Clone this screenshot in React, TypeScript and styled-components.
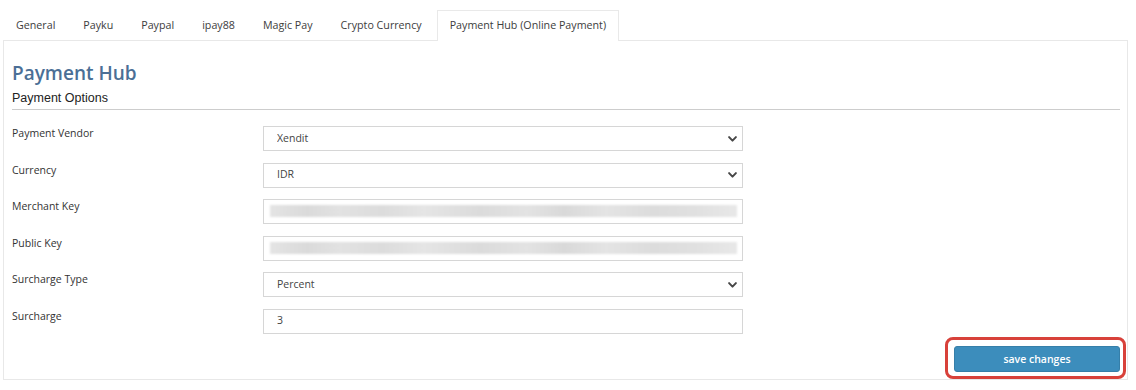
import React from "react";
import styled, { createGlobalStyle } from "styled-components";

const GlobalStyle = createGlobalStyle`
  html, body { margin: 0; padding: 0; background: #ffffff; }
  body { font-family: "Open Sans", "Noto Sans", sans-serif; color: #333; }
  * { box-sizing: border-box; }
`;

const Page = styled.div`
  padding: 10px 8px 0 3px;
`;

const TabList = styled.div`
  display: flex;
  align-items: flex-start;
  height: 30px;
`;

const Tab = styled.div<{ $active?: boolean }>`
  position: relative;
  z-index: 1;
  height: ${(p) => (p.$active ? "31px" : "30px")};
  padding: 0 12px;
  margin-right: 2px;
  border: 1px solid ${(p) => (p.$active ? "#e9e9e9" : "transparent")};
  border-bottom: none;
  background: ${(p) => (p.$active ? "#ffffff" : "transparent")};
  font-size: 10.7px;
  line-height: 28px;
  color: #3d3d3d;
  white-space: nowrap;
  cursor: pointer;
`;

const Panel = styled.div`
  border: 1px solid #e8e8e8;
  padding: 20px 7px 7px 8px;
  background: #fff;
`;

const Title = styled.h2`
  margin: 0;
  font-family: "Open Sans", sans-serif;
  font-weight: 600;
  font-size: 19px;
  line-height: 24px;
  color: #4b6f96;
`;

const Subtitle = styled.h4`
  margin: 5px 0 0;
  font-family: "Liberation Sans", Arial, sans-serif;
  font-weight: 400;
  font-size: 12.5px;
  line-height: 16px;
  color: #222;
`;

const Divider = styled.hr`
  margin: 3px 0 0;
  border: none;
  height: 1px;
  background: #cdcdcd;
`;

const Form = styled.div`
  display: grid;
  grid-template-columns: 251px 480px;
  row-gap: 11.5px;
  margin-top: 16px;
`;

const Label = styled.label`
  font-size: 10.5px;
  line-height: 14px;
  color: #333;
`;

const SelectWrap = styled.div`
  position: relative;
  height: 25px;
`;

const fieldBase = `
  display: block;
  width: 100%;
  height: 25px;
  border: 1px solid #d6d6d6;
  border-radius: 0;
  background: #fff;
  font-family: "Open Sans", sans-serif;
  font-size: 10.5px;
  color: #444;
  padding: 0 13px 2px;
  margin: 0;
  outline: none;
`;

const Select = styled.select`
  ${fieldBase}
  appearance: none;
  -webkit-appearance: none;
`;

const Chevron = styled.svg`
  position: absolute;
  right: 6px;
  top: 50%;
  margin-top: -3px;
  width: 9px;
  height: 6px;
  pointer-events: none;
`;

const TextInput = styled.input`
  ${fieldBase}
`;

const MaskedField = styled.div`
  height: 25px;
  border: 1px solid #d6d6d6;
  padding: 5px 5px 6px 6px;
  display: flex;
  overflow: hidden;
`;

const MaskedValue = styled.div`
  flex: 1;
  background: linear-gradient(
    90deg,
    #e4e4e4 0%,
    #dadada 8%,
    #e2e2e2 15%,
    #dcdcdc 24%,
    #e5e5e5 33%,
    #dbdbdb 45%,
    #e3e3e3 55%,
    #d9d9d9 63%,
    #e4e4e4 72%,
    #dcdcdc 82%,
    #e1e1e1 92%,
    #e8e8e8 100%
  );
  filter: blur(1.2px);
`;

const Footer = styled.div`
  display: flex;
  justify-content: flex-end;
  margin-top: 12px;
`;

const ButtonWrap = styled.div`
  position: relative;
`;

const SaveButton = styled.button`
  display: block;
  width: 166px;
  height: 26px;
  border: 1px solid #367fa9;
  border-radius: 3px;
  background: #3c8dbc;
  color: #fff;
  font-family: "Open Sans", sans-serif;
  font-weight: 600;
  font-size: 10.5px;
  cursor: pointer;
`;

const Highlight = styled.div`
  position: absolute;
  left: -9px;
  right: -6px;
  top: -9px;
  bottom: -7px;
  border: 3px solid #d8413a;
  border-radius: 8px;
  pointer-events: none;
`;

const tabs = [
  "General",
  "Payku",
  "Paypal",
  "ipay88",
  "Magic Pay",
  "Crypto Currency",
  "Payment Hub (Online Payment)",
];

const SelectField = ({ value, options }: { value: string; options: string[] }) => (
  <SelectWrap>
    <Select defaultValue={value}>
      {options.map((o) => (
        <option key={o} value={o}>
          {o}
        </option>
      ))}
    </Select>
    <Chevron viewBox="0 0 9 6">
      <polyline points="1.1,1.1 4.5,4.6 7.9,1.1" fill="none" stroke="#474747" strokeWidth="2" strokeLinecap="round" strokeLinejoin="round" />
    </Chevron>
  </SelectWrap>
);

export default function App() {
  return (
    <>
      <GlobalStyle />
      <Page>
        <TabList>
          {tabs.map((t, i) => (
            <Tab key={t} $active={i === tabs.length - 1}>
              {t}
            </Tab>
          ))}
        </TabList>
        <Panel>
          <Title>Payment Hub</Title>
          <Subtitle>Payment Options</Subtitle>
          <Divider />
          <Form>
            <Label>Payment Vendor</Label>
            <SelectField value="Xendit" options={["Xendit", "Midtrans", "Stripe"]} />
            <Label>Currency</Label>
            <SelectField value="IDR" options={["IDR", "USD", "MYR"]} />
            <Label>Merchant Key</Label>
            <MaskedField>
              <MaskedValue />
            </MaskedField>
            <Label>Public Key</Label>
            <MaskedField>
              <MaskedValue />
            </MaskedField>
            <Label>Surcharge Type</Label>
            <SelectField value="Percent" options={["Percent", "Fixed"]} />
            <Label>Surcharge</Label>
            <TextInput defaultValue="3" />
          </Form>
          <Footer>
            <ButtonWrap>
              <SaveButton>save changes</SaveButton>
              <Highlight />
            </ButtonWrap>
          </Footer>
        </Panel>
      </Page>
    </>
  );
}
